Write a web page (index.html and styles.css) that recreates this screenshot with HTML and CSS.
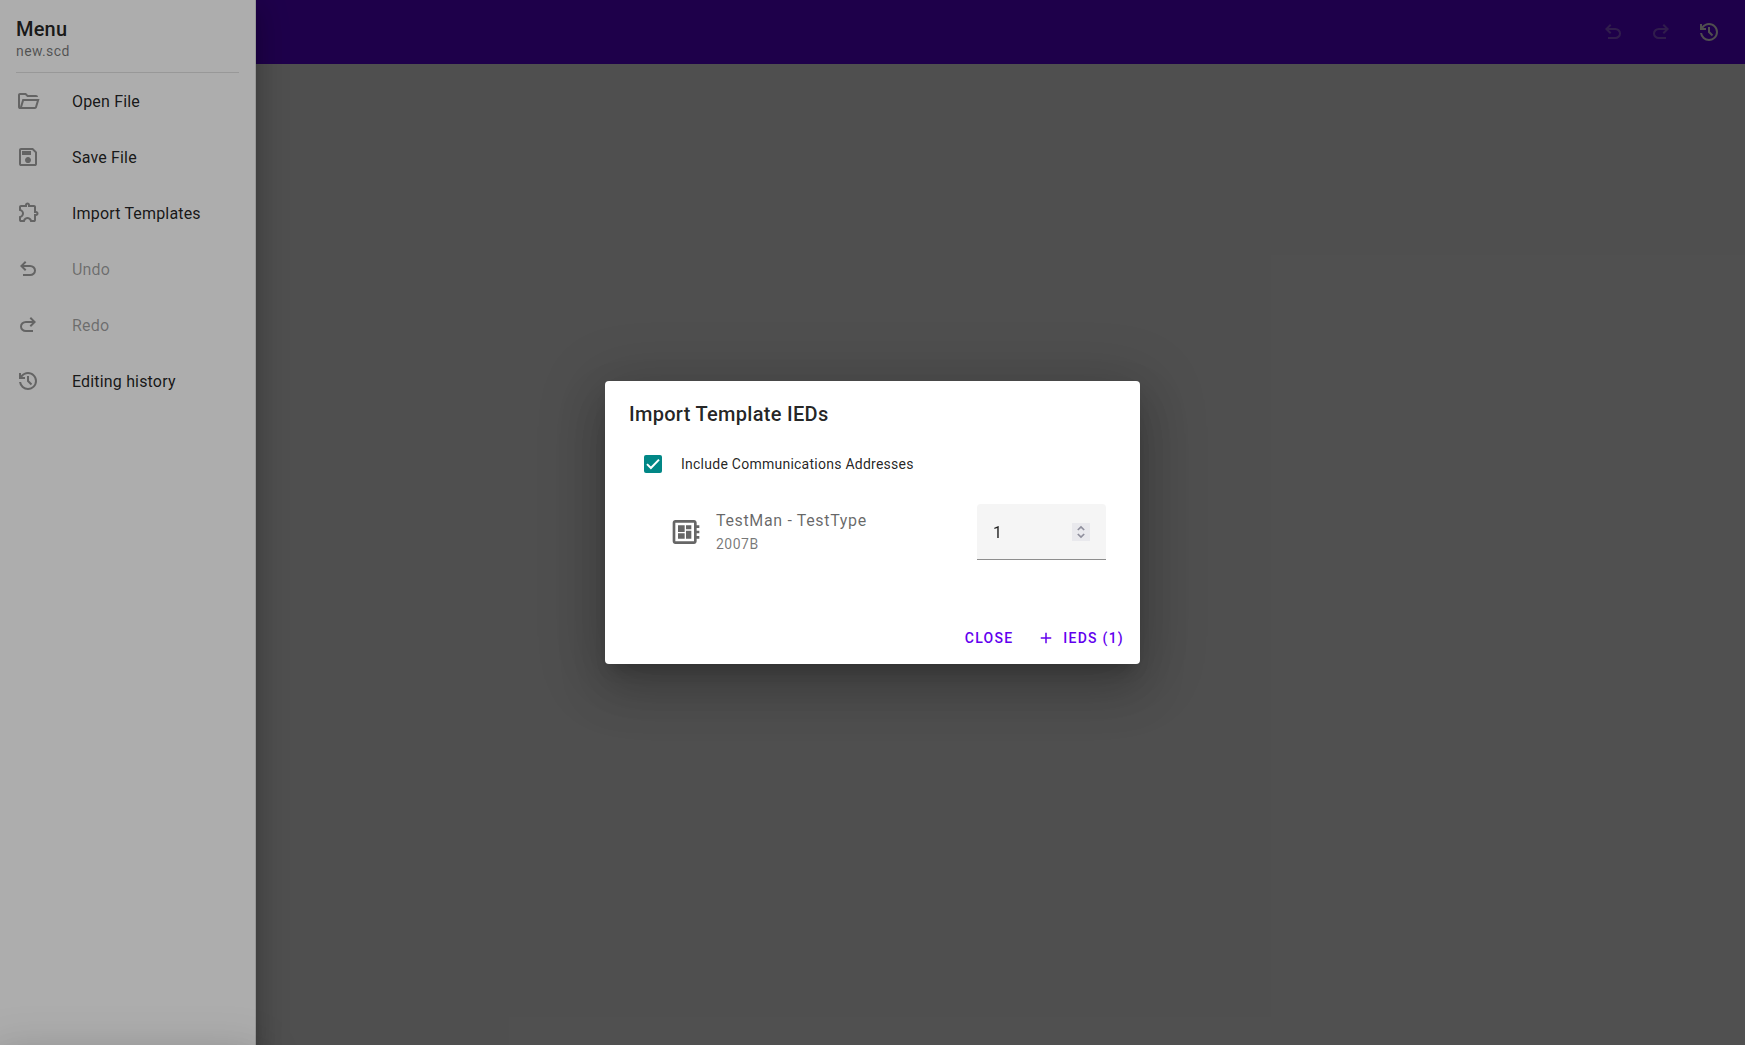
FILE: index.html
```html
<!DOCTYPE html>
<html lang="en">
<head>
<meta charset="utf-8">
<title>new.scd</title>
<link rel="stylesheet" href="styles.css">
</head>
<body>
<svg class="defs">
  <symbol id="undo" viewBox="0 0 24 24"><path d="M7 19v-2h7.1q1.575 0 2.737-1Q18 15 18 13.5T16.837 11Q15.675 10 14.1 10H7.8l2.6 2.6L9 14 4 9l5-5 1.4 1.4L7.8 8h6.3q2.425 0 4.163 1.575Q20 11.15 20 13.5t-1.737 3.925Q16.525 19 14.1 19Z"/></symbol>
  <symbol id="redo" viewBox="0 0 24 24"><path d="M9.9 19q-2.425 0-4.163-1.575Q4 15.85 4 13.5t1.737-3.925Q7.475 8 9.9 8h6.3l-2.6-2.6L15 4l5 5-5 5-1.4-1.4 2.6-2.6H9.9q-1.575 0-2.737 1Q6 12 6 13.5T7.163 16Q8.325 17 9.9 17H17v2Z"/></symbol>
  <symbol id="history" viewBox="0 0 24 24"><path d="M12 21q-3.45 0-6.012-2.287Q3.425 16.425 3.05 13H5.1q.35 2.6 2.313 4.3Q9.375 19 12 19q2.925 0 4.963-2.037Q19 14.925 19 12t-2.037-4.963Q14.925 5 12 5q-1.725 0-3.225.8T6.25 8H9v2H3V4h2v2.35q1.275-1.6 3.113-2.475Q9.95 3 12 3q1.875 0 3.513.713 1.637.712 2.85 1.924 1.212 1.213 1.925 2.85Q21 10.125 21 12t-.712 3.513q-.713 1.637-1.925 2.85-1.213 1.212-2.85 1.925Q13.875 21 12 21Zm2.8-4.8L11 12.4V7h2v4.6l3.2 3.2Z"/></symbol>
  <symbol id="folder" viewBox="0 0 24 24"><path d="M4 20q-.825 0-1.412-.587Q2 18.825 2 18V6q0-.825.588-1.412Q3.175 4 4 4h6l2 2h8q.825 0 1.413.588Q22 7.175 22 8H11.175l-2-2H4v12l2.4-8h17.1l-2.575 8.575q-.2.65-.737 1.038Q19.65 20 19 20Zm2.1-2H19l1.8-6H7.9Z"/></symbol>
  <symbol id="save" viewBox="0 0 24 24"><path d="M21 7v12q0 .825-.587 1.413Q19.825 21 19 21H5q-.825 0-1.413-.587Q3 19.825 3 19V5q0-.825.587-1.413Q4.175 3 5 3h12Zm-2 .85L16.15 5H5v14h14ZM12 18q1.25 0 2.125-.875T15 15q0-1.25-.875-2.125T12 12q-1.25 0-2.125.875T9 15q0 1.25.875 2.125T12 18Zm-6-8h9V6H6Z"/></symbol>
  <symbol id="extension" viewBox="0 0 24 24"><path d="M8.8 21H5q-.825 0-1.413-.587Q3 19.825 3 19v-3.8q1.2 0 2.1-.762.9-.763.9-1.938 0-1.175-.9-1.937-.9-.763-2.1-.763V6q0-.825.587-1.412Q4.175 4 5 4h4q0-1.05.725-1.775Q10.45 1.5 11.5 1.5q1.05 0 1.775.725Q14 2.95 14 4h4q.825 0 1.413.588Q20 5.175 20 6v4q1.05 0 1.775.725.725.725.725 1.775 0 1.05-.725 1.775Q21.05 15 20 15v4q0 .825-.587 1.413Q18.825 21 18 21h-3.8q0-1.25-.787-2.125Q12.625 18 11.5 18t-1.912.875Q8.8 19.75 8.8 21ZM5 19h2.125q.6-1.65 1.925-2.325Q10.375 16 11.5 16q1.125 0 2.45.675Q15.275 17.35 15.875 19H18v-6h2q.2 0 .35-.15.15-.15.15-.35 0-.2-.15-.35Q20.2 12 20 12h-2V6h-6V4q0-.2-.15-.35-.15-.15-.35-.15-.2 0-.35.15Q11 3.8 11 4v2H5v2.2q1.35.5 2.175 1.675Q8 11.05 8 12.5q0 1.425-.825 2.6Q6.35 16.275 5 16.8Z"/></symbol>
  <symbol id="board" viewBox="0 0 24 24"><path d="M22 9V7h-2V5c0-1.1-.9-2-2-2H4c-1.1 0-2 .9-2 2v14c0 1.1.9 2 2 2h14c1.1 0 2-.9 2-2v-2h2v-2h-2v-2h2v-2h-2V9h2Zm-4 10H4V5h14v14ZM6 13h5v4H6Zm6-6h4v3h-4ZM6 7h5v5H6Zm6 4h4v6h-4Z"/></symbol>
</svg>

<div class="app">
  <header class="topbar">
    <svg class="icon faint"><use href="#undo"/></svg>
    <svg class="icon faint"><use href="#redo"/></svg>
    <svg class="icon"><use href="#history"/></svg>
  </header>
  <div class="page-scrim"></div>
  <aside class="drawer">
    <div class="drawer-head">
      <h3 class="drawer-title">Menu</h3>
      <h6 class="drawer-sub">new.scd</h6>
    </div>
    <ul class="menu">
      <li class="item"><svg class="icon"><use href="#folder"/></svg><span>Open File</span></li>
      <li class="item"><svg class="icon"><use href="#save"/></svg><span>Save File</span></li>
      <li class="item"><svg class="icon"><use href="#extension"/></svg><span>Import Templates</span></li>
      <li class="item disabled"><svg class="icon"><use href="#undo"/></svg><span>Undo</span></li>
      <li class="item disabled"><svg class="icon"><use href="#redo"/></svg><span>Redo</span></li>
      <li class="item"><svg class="icon"><use href="#history"/></svg><span>Editing history</span></li>
    </ul>
    <div class="sheet"></div>
  </aside>
  <div class="modal">
    <section class="dialog">
      <h2 class="dialog-title">Import Template IEDs</h2>
      <div class="check-row">
        <svg class="check" viewBox="0 0 18 18"><rect width="18" height="18" rx="2"/><path d="M3 9.1 6.9 13 15 4.6"/></svg>
        <span>Include Communications Addresses</span>
      </div>
      <div class="ied">
        <svg class="ied-icon"><use href="#board"/></svg>
        <div class="ied-text">
          <span class="ied-name">TestMan - TestType</span>
          <span class="ied-rev">2007B</span>
        </div>
        <div class="field">
          <span class="field-value">1</span>
          <svg class="spin" viewBox="0 0 18 18"><path d="M5.8 7 9 3.9 12.2 7M5.8 11 9 14.1 12.2 11"/></svg>
        </div>
      </div>
      <div class="actions">
        <button class="btn">Close</button>
        <button class="btn"><svg class="plus" viewBox="0 0 24 24"><path d="M11 19v-6H5v-2h6V5h2v6h6v2h-6v6Z"/></svg>IEDs (1)</button>
      </div>
    </section>
  </div>
</div>
</body>
</html>
```
FILE: styles.css
```css
* { box-sizing: border-box; }
body { margin: 0; font-family: Roboto, sans-serif; -webkit-font-smoothing: antialiased; }
h2, h3, h6, ul { margin: 0; padding: 0; }
.defs { display: none; }
.icon { width: 24px; height: 24px; fill: currentColor; flex: none; }

.app { position: relative; height: 100vh; overflow: hidden; background: #adadad; }
.topbar {
  height: 64px; padding: 0 24px; background: #4300a2; color: #adadad;
  display: flex; align-items: center; justify-content: flex-end; gap: 24px;
}
.topbar .faint { opacity: .38; }
.page-scrim { position: absolute; inset: 0; background: rgba(0, 0, 0, .32); }

.drawer {
  position: absolute; inset: 0 auto 0 0; width: 256px; background: #fff;
  border-right: 1px solid rgba(0, 0, 0, .12);
  box-shadow: 0 8px 10px -5px rgba(0, 0, 0, .2), 0 16px 24px 2px rgba(0, 0, 0, .14), 0 6px 30px 5px rgba(0, 0, 0, .12);
}
.drawer-head { height: 73px; margin: 0 16px; padding-top: 17px; border-bottom: 1px solid rgba(0, 0, 0, .12); }
.drawer-title { font-size: 20px; line-height: 24px; font-weight: 500; letter-spacing: .2px; color: rgba(0, 0, 0, .87); }
.drawer-sub { font-size: 14px; line-height: 20px; font-weight: 400; letter-spacing: .4px; color: rgba(0, 0, 0, .54); }
.menu { list-style: none; }
.item {
  display: flex; align-items: center; gap: 32px; height: 56px; padding: 0 16px;
  font-size: 16px; letter-spacing: .17px; color: rgba(0, 0, 0, .87);
}
.item .icon { color: rgba(0, 0, 0, .42); }
.item.disabled span { color: rgba(0, 0, 0, .38); }
.sheet {
  position: absolute; left: 0; right: 0; top: 100%; height: 56px;
  box-shadow: 0 11px 15px -7px rgba(0, 0, 0, .2), 0 24px 38px 3px rgba(0, 0, 0, .14), 0 9px 46px 8px rgba(0, 0, 0, .12);
}

.modal {
  position: absolute; inset: 0; background: rgba(0, 0, 0, .32);
  display: flex; align-items: center; justify-content: center;
}
.dialog {
  width: 535px; height: 283px; background: #fff; border-radius: 4px;
  display: flex; flex-direction: column;
  box-shadow: 0 11px 15px -7px rgba(0, 0, 0, .2), 0 24px 46px 3px rgba(0, 0, 0, .15), 0 9px 64px 8px rgba(0, 0, 0, .16);
}
.dialog-title {
  padding: 17px 24px 0; font-size: 20px; line-height: 32px; font-weight: 500;
  letter-spacing: .3px; color: rgba(0, 0, 0, .87);
}
.check-row {
  display: flex; align-items: center; gap: 19px; height: 40px; margin-top: 14px; padding-left: 39px;
  font-size: 14px; letter-spacing: .25px; color: rgba(0, 0, 0, .87);
}
.check { width: 18px; height: 18px; fill: #018786; }
.check path { fill: none; stroke: #fff; stroke-width: 2; }
.ied { display: flex; align-items: center; margin-top: 20px; padding: 0 34px 0 64.5px; }
.ied-icon { width: 32px; height: 32px; fill: #666; }
.ied-text { flex: 1; display: flex; flex-direction: column; padding-left: 14.5px; }
.ied-name { font-size: 16px; line-height: 24px; letter-spacing: .65px; color: rgba(0, 0, 0, .6); }
.ied-rev { font-size: 14px; line-height: 22px; letter-spacing: .5px; color: rgba(0, 0, 0, .54); }
.field {
  width: 129px; height: 56px; padding: 0 16px; background: #f5f5f5;
  border-bottom: 1px solid #8e8e8e; border-radius: 4px 4px 0 0;
  display: flex; align-items: center; justify-content: space-between;
  font-size: 16px; color: rgba(0, 0, 0, .87);
}
.field-value { padding-top: 2px; will-change: transform; }
.spin { width: 18px; height: 18px; background: #e9e9ed; fill: none; stroke: #8f8f9d; stroke-width: 1.7; }
.actions { display: flex; justify-content: flex-end; gap: 8px; margin-top: auto; padding: 8px; }
.btn {
  display: flex; align-items: center; gap: 8px; height: 36px; padding: 0 8px; border: 0; background: none;
  font: 500 14px Roboto, sans-serif; letter-spacing: 1.25px; text-transform: uppercase; color: #6200ee;
}
.plus { width: 18px; height: 18px; fill: currentColor; }
```
